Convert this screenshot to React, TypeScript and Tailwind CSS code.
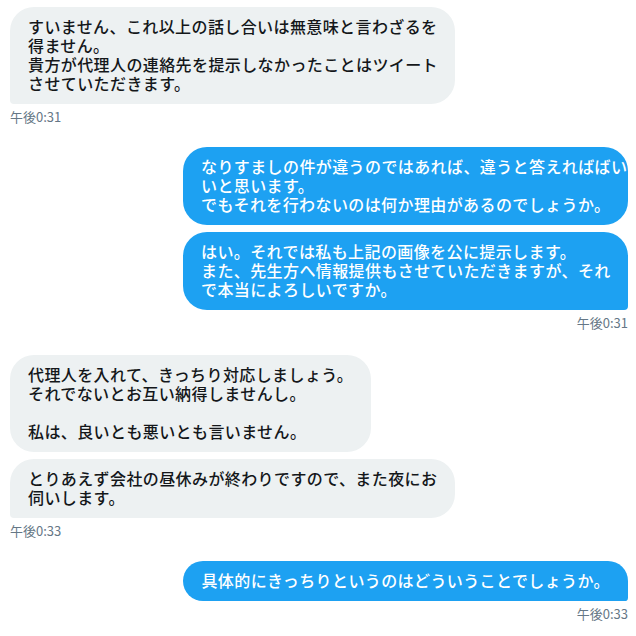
import React from "react";

const FONT = { fontFamily: '"Noto Sans CJK JP", "Noto Sans", sans-serif' };

function Bubble({
  lines,
  sent,
  last,
  wide,
}: {
  lines: string[];
  sent?: boolean;
  last?: boolean;
  wide?: boolean;
}) {
  const base =
    "px-[18px] pt-[10px] pb-[11px] text-[16px] leading-[19px] tracking-[0.4px] font-medium whitespace-nowrap rounded-[24px]";
  const color = sent ? "bg-[#1da1f2] text-white" : "bg-[#edf1f2] text-[#14171a]";
  const corner = last ? (sent ? "rounded-br-[4px]" : "rounded-bl-[4px]") : "";
  const width = wide ? "w-[445px]" : "";
  return (
    <div className={`${base} ${color} ${corner} ${width}`}>
      {lines.map((l, i) => (
        <div key={i} className="h-[19px]">
          {l}
        </div>
      ))}
    </div>
  );
}

function Time({ text, right }: { text: string; right?: boolean }) {
  return (
    <div
      className={`mt-[5px] text-[13px] leading-[16px] text-[#657786] ${right ? "self-end" : "self-start"}`}
    >
      {text}
    </div>
  );
}

export default function App() {
  return (
    <div className="w-[636px] h-[636px] bg-white pl-[10px] pr-[8px] pt-[7px]" style={FONT}>
      <div className="flex flex-col items-start">
        <Bubble
          wide
          last
          lines={[
            "すいません、これ以上の話し合いは無意味と言わざるを",
            "得ません。",
            "貴方が代理人の連絡先を提示しなかったことはツイート",
            "させていただきます。",
          ]}
        />
        <Time text="午後0:31" />
      </div>

      <div className="mt-[22px] flex flex-col items-end gap-[7px]">
        <Bubble
          sent
          wide
          lines={[
            "なりすましの件が違うのではあれば、違うと答えればばい",
            "いと思います。",
            "でもそれを行わないのは何か理由があるのでしょうか。",
          ]}
        />
        <Bubble
          sent
          wide
          last
          lines={[
            "はい。それでは私も上記の画像を公に提示します。",
            "また、先生方へ情報提供もさせていただきますが、それ",
            "で本当によろしいですか。",
          ]}
        />
      </div>
      <div className="flex flex-col items-end">
        <Time text="午後0:31" right />
      </div>

      <div className="mt-[24px] flex flex-col items-start gap-[7px]">
        <Bubble
          lines={[
            "代理人を入れて、きっちり対応しましょう。",
            "それでないとお互い納得しませんし。",
            "\u00a0",
            "私は、良いとも悪いとも言いません。",
          ]}
        />
        <Bubble
          wide
          last
          lines={[
            "とりあえず会社の昼休みが終わりですので、また夜にお",
            "伺いします。",
          ]}
        />
      </div>
      <div className="flex flex-col items-start">
        <Time text="午後0:33" />
      </div>

      <div className="mt-[22px] flex flex-col items-end">
        <Bubble sent last lines={["具体的にきっちりというのはどういうことでしょうか。"]} />
        <Time text="午後0:33" right />
      </div>
    </div>
  );
}
